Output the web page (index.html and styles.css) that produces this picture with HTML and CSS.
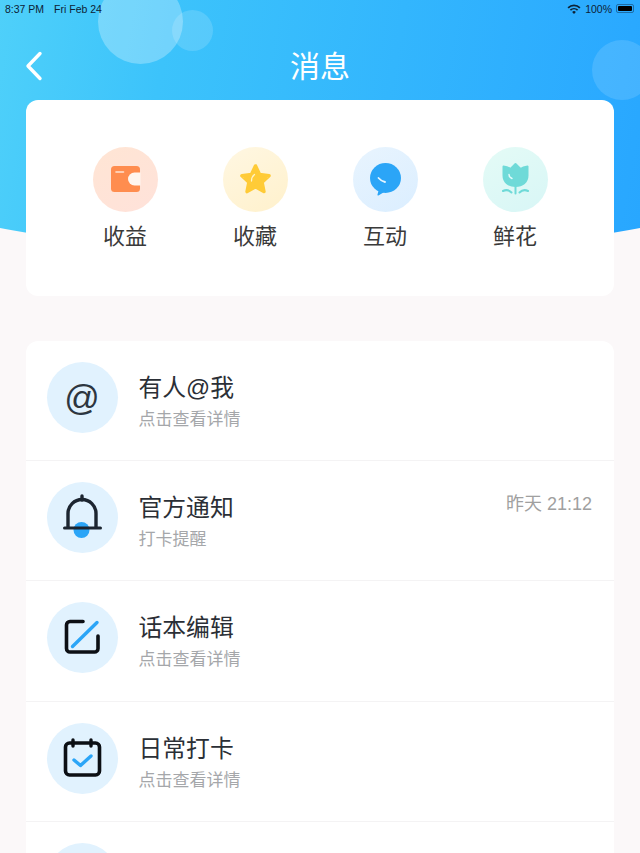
FILE: index.html
```html
<!DOCTYPE html>
<html lang="en">

<head>
    <meta charset="UTF-8">
    <meta name="viewport" content="width=device-width, initial-scale=1.0">
    <title>消息</title>
    <link rel="stylesheet" href="styles.css">
</head>

<body>
    <div class="page">
        <div class="hero"></div>
        <div class="bubble bubble-big"></div>
        <div class="bubble bubble-small"></div>
        <div class="bubble bubble-right"></div>

        <div class="status">
            <div class="status-left">
                <span>8:37 PM</span>
                <span>Fri Feb 24</span>
            </div>
            <div class="status-right">
                <svg width="14" height="10" viewBox="0 0 14 10">
                    <path d="M0.5 3.2a9.2 9.2 0 0 1 13 0l-1.2 1.3a7.5 7.5 0 0 0-10.6 0z" fill="#0d2235"/>
                    <path d="M2.8 5.6a6 6 0 0 1 8.400 0l-1.2 1.2a4.300 4.300 0 0 0-6 0z" fill="#0d2235"/>
                    <path d="M5.1 7.9a2.8 2.8 0 0 1 3.8 0L7 9.9z" fill="#0d2235"/>
                </svg>
                <span>100%</span>
                <div class="battery"><i></i></div>
            </div>
        </div>

        <div class="nav">
            <svg class="back" width="18" height="30" viewBox="0 0 18 30">
                <path d="M15 2.500L3 15l12 12.500" fill="none" stroke="#fff" stroke-width="3.400" stroke-linecap="round" stroke-linejoin="round"/>
            </svg>
            <h1>消息</h1>
        </div>

        <div class="card shortcuts">
            <div class="shortcut">
                <div class="round round-orange">
                    <svg width="65" height="65" viewBox="0 0 65 65">
                        <rect x="18" y="19" width="29" height="26" rx="3.500" fill="#ff8d4f"/>
                        <path d="M47.500 25.500h-6a6.500 6.500 0 0 0 0 13h6z" fill="#fff6ef"/>
                        <path d="M23 25h7.500" stroke="#ffe3d2" stroke-width="1.600" stroke-linecap="round"/>
                    </svg>
                </div>
                <span>收益</span>
            </div>
            <div class="shortcut">
                <div class="round round-yellow">
                    <svg width="65" height="65" viewBox="0 0 65 65">
                        <path d="M32.500 19l4 8.500 9.500 1.200-7 6.500 1.900 9.300-8.400-4.700-8.400 4.700 1.900-9.300-7-6.500 9.500-1.200z" fill="#ffcb37" stroke="#ffcb37" stroke-width="3.600" stroke-linejoin="round"/>
                        <path d="M28.500 34c0-3 1-5 3-6.500" fill="none" stroke="#fff3c9" stroke-width="1.300" stroke-linecap="round"/>
                    </svg>
                </div>
                <span>收藏</span>
            </div>
            <div class="shortcut">
                <div class="round round-blue">
                    <svg width="65" height="65" viewBox="0 0 65 65">
                        <ellipse cx="32.500" cy="31" rx="15.500" ry="15" fill="#2ba5f7"/>
                        <path d="M26 42l-1.500 5.500c-.2 1 .5 1.300 1.300.8L33 44z" fill="#2ba5f7"/>
                        <path d="M25.500 31c1.700 2 3.500 3.300 6.500 4" fill="none" stroke="#e6f5ff" stroke-width="1.800" stroke-linecap="round"/>
                    </svg>
                </div>
                <span>互动</span>
            </div>
            <div class="shortcut">
                <div class="round round-green">
                    <svg width="65" height="65" viewBox="0 0 65 65">
                        <path d="M32.500 17l5 5c2-1.500 3.500-2 7-2.500v9c0 6.500-5 10.500-12 10.500s-12-4-12-10.500v-9c3.500.5 5 1 7 2.500z" fill="#6fdad8" stroke="#6fdad8" stroke-width="2" stroke-linejoin="round"/>
                        <path d="M26 27.500c0 2 1 3.200 3 4" fill="none" stroke="#e6fbfa" stroke-width="1.400" stroke-linecap="round"/>
                        <path d="M32.500 39v7.500M20 44c3-1.500 6-1 8.500 1.500M45 44c-3-1.500-6-1-8.500 1.500" fill="none" stroke="#6fdad8" stroke-width="2" stroke-linecap="round"/>
                    </svg>
                </div>
                <span>鲜花</span>
            </div>
        </div>

        <div class="card list">
            <div class="row">
                <div class="avatar at">@</div>
                <div class="text">
                    <div class="title">有人@我</div>
                    <div class="sub">点击查看详情</div>
                </div>
            </div>
            <div class="row">
                <div class="avatar">
                    <svg width="71" height="71" viewBox="0 0 71 71">
                        <circle cx="34.500" cy="48" r="8" fill="#2ba5f7"/>
                        <path d="M21 45V31.500a14 14 0 0 1 28 0V45" fill="none" stroke="#1c2530" stroke-width="3.400"/>
                        <path d="M35 14v4" stroke="#1c2530" stroke-width="3.400" stroke-linecap="round"/>
                        <path d="M17.500 46h36" stroke="#1c2530" stroke-width="3" stroke-linecap="round"/>
                    </svg>
                </div>
                <div class="text">
                    <div class="title">官方通知</div>
                    <div class="sub">打卡提醒</div>
                </div>
                <div class="time">昨天 21:12</div>
            </div>
            <div class="row">
                <div class="avatar">
                    <svg width="71" height="71" viewBox="0 0 71 71">
                        <path d="M36 19.500H23a3.500 3.500 0 0 0-3.500 3.500v23.500a3.500 3.500 0 0 0 3.500 3.500h24.500a3.500 3.500 0 0 0 3.500-3.500V34" fill="none" stroke="#0c0f14" stroke-width="3.600" stroke-linecap="round"/>
                        <path d="M25.500 44.500L50 20.500" stroke="#2ba5f7" stroke-width="3.400" stroke-linecap="round"/>
                    </svg>
                </div>
                <div class="text">
                    <div class="title">话本编辑</div>
                    <div class="sub">点击查看详情</div>
                </div>
            </div>
            <div class="row">
                <div class="avatar">
                    <svg width="71" height="71" viewBox="0 0 71 71">
                        <rect x="18.500" y="20" width="34" height="32" rx="4" fill="none" stroke="#0c0f14" stroke-width="3.600"/>
                        <path d="M26 17v6M44 17v6" stroke="#0c0f14" stroke-width="3.400" stroke-linecap="round"/>
                        <path d="M27 37l6.500 5.500L44 33" fill="none" stroke="#2ba5f7" stroke-width="3.400" stroke-linecap="round" stroke-linejoin="round"/>
                    </svg>
                </div>
                <div class="text">
                    <div class="title">日常打卡</div>
                    <div class="sub">点击查看详情</div>
                </div>
            </div>
            <div class="row">
                <div class="avatar"></div>
            </div>
        </div>
    </div>
</body>

</html>
```

FILE: styles.css
```css
* {
    padding: 0;
    margin: 0;
    box-sizing: border-box;
}

html,
body {
    width: 100%;
    height: 100%;
    overflow: hidden;
    background-color: #fbf8f9;
}

body {
    font-family: "Liberation Sans", "Noto Sans CJK SC", sans-serif;
}

.page {
    position: relative;
    width: 640px;
    height: 853px;
    overflow: hidden;
    padding: 0 26px;
}

/* blue background with curved bottom */
.hero {
    position: absolute;
    left: -80px;
    top: 0;
    width: 800px;
    height: 252px;
    border-radius: 0 0 50% 50% / 0 0 60px 60px;
    background-image: linear-gradient(100deg, #57d6f9 0%, #3cc3fb 30%, #2aa9ff 85%, #24a3ff 100%);
}

.bubble {
    position: absolute;
    border-radius: 50%;
}

.bubble-big {
    left: 98px;
    top: -21px;
    width: 85px;
    height: 85px;
    background-color: rgba(255, 255, 255, 0.28);
}

.bubble-small {
    left: 172px;
    top: 10px;
    width: 41px;
    height: 41px;
    background-color: rgba(255, 255, 255, 0.15);
}

.bubble-right {
    left: 592px;
    top: 40px;
    width: 60px;
    height: 60px;
    background-color: rgba(255, 255, 255, 0.13);
}

.status {
    position: relative;
    height: 17px;
    margin: 0 -21px;
    display: flex;
    justify-content: space-between;
    align-items: center;
    font-size: 10.5px;
    color: #0d2235;
}

.status-left {
    display: flex;
    gap: 10px;
}

.status-right {
    display: flex;
    align-items: center;
    gap: 4px;
    margin-right: 1px;
}

.battery {
    width: 18px;
    height: 9px;
    padding: 1px;
    border: 1px solid #1d6ea8;
    border-radius: 2px;
}

.battery i {
    display: block;
    height: 100%;
    background-color: #000;
    border-radius: 1px;
}

.nav {
    position: relative;
    height: 83px;
    display: flex;
    align-items: center;
    justify-content: center;
}

.nav h1 {
    font-size: 30px;
    font-weight: 400;
    color: #fff;
    line-height: 40px;
    margin-top: 16px;
}

.back {
    position: absolute;
    left: -1px;
    top: 34px;
}

.card {
    position: relative;
    background-color: #fff;
    border-radius: 12px;
}

.shortcuts {
    height: 196px;
    padding: 47px 34px 0;
    display: grid;
    grid-template-columns: repeat(4, 130px);
    justify-content: center;
    margin-bottom: 45px;
}

.shortcut {
    display: flex;
    flex-direction: column;
    align-items: center;
    gap: 10px;
    font-size: 22px;
    line-height: 30px;
    color: #3a3a3a;
}

.round {
    width: 65px;
    height: 65px;
    border-radius: 50%;
}

.round svg,
.avatar svg {
    display: block;
}

.round-orange {
    background-image: linear-gradient(150deg, #ffe5d4, #ffe2da);
}

.round-yellow {
    background-image: linear-gradient(150deg, #fff7e2, #fff1cc);
}

.round-blue {
    background-image: linear-gradient(150deg, #e8f4fe, #dbeeff);
}

.round-green {
    background-image: linear-gradient(150deg, #e4fbf6, #d8f6f6);
}

.list {
    height: 600px;
}

.row {
    height: 120.2px;
    padding: 21px 22px 0 20.5px;
    display: flex;
    gap: 21px;
    border-bottom: 1px solid #f4f3f4;
}

.avatar {
    flex: none;
    width: 71px;
    height: 71px;
    border-radius: 50%;
    background-color: #e1f2fe;
}

.at {
    text-align: center;
    font-size: 35px;
    line-height: 71px;
    color: #2d3640;
}

.text {
    flex: 1;
    padding-top: 11px;
}

.title {
    font-size: 23.8px;
    line-height: 30px;
    color: #2b2f36;
}

.sub {
    margin-top: 5px;
    font-size: 17px;
    line-height: 24px;
    color: #a5a7aa;
}

.time {
    padding-top: 9px;
    font-size: 18px;
    line-height: 26px;
    color: #a0a0a0;
}
```
